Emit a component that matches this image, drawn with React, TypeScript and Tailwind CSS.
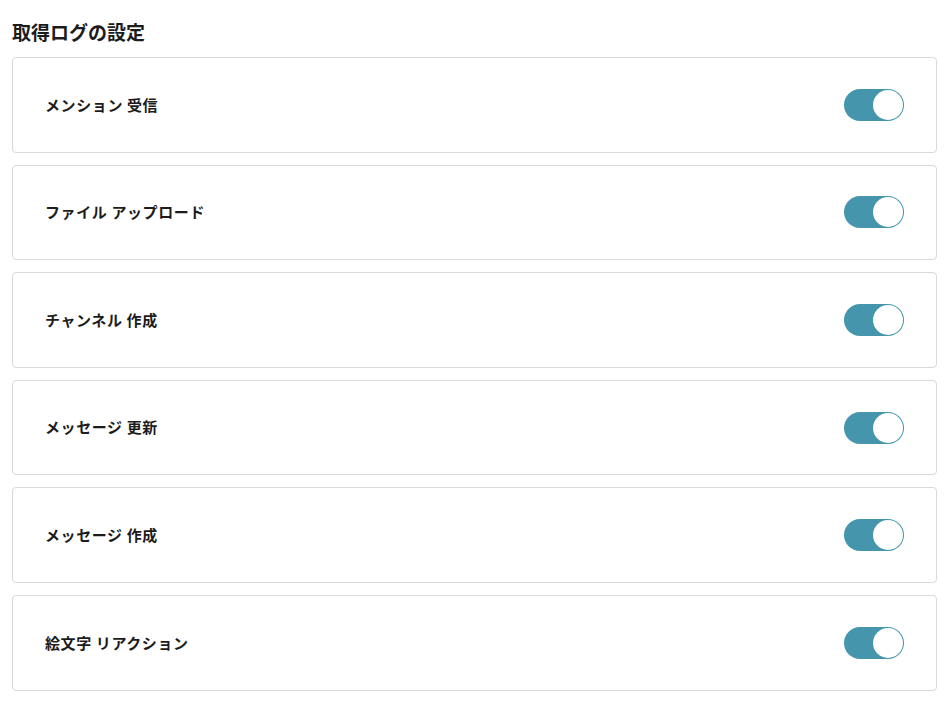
import { useState } from "react";

const items = [
  "メンション 受信",
  "ファイル アップロード",
  "チャンネル 作成",
  "メッセージ 更新",
  "メッセージ 作成",
  "絵文字 リアクション",
];

function Toggle({ on, onChange }: { on: boolean; onChange: () => void }) {
  return (
    <button
      type="button"
      onClick={onChange}
      className={`relative h-[32px] w-[60px] rounded-full transition-colors ${
        on ? "bg-[#4596ad]" : "bg-[#cfcfcf]"
      }`}
    >
      <span
        className={`absolute top-[1px] h-[30px] w-[30px] rounded-full bg-white transition-all ${
          on ? "left-[29px]" : "left-[1px]"
        }`}
      />
    </button>
  );
}

export default function App() {
  const [states, setStates] = useState(items.map(() => true));

  return (
    <div
      className="min-h-screen bg-white pl-3 pr-[15px] pt-[18px] text-[#1c1c1c]"
      style={{ fontFamily: '"Noto Sans CJK JP", "Noto Sans", sans-serif' }}
    >
      <h1 className="mb-3 text-[19px] font-bold leading-[27px]">取得ログの設定</h1>
      <div className="flex flex-col gap-[12px]">
        {items.map((label, i) => (
          <div
            key={label}
            className="flex h-[95.6px] items-center justify-between rounded-[4px] border border-[#d9d9d9] px-8"
          >
            <span className="text-[15px] font-bold tracking-[0.6px]">{label}</span>
            <Toggle
              on={states[i]}
              onChange={() =>
                setStates((s) => s.map((v, j) => (j === i ? !v : v)))
              }
            />
          </div>
        ))}
      </div>
    </div>
  );
}
